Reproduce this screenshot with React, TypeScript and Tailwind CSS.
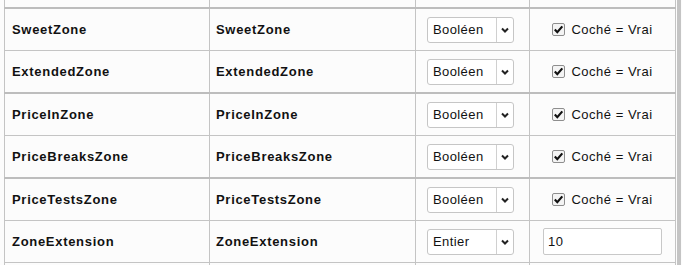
import React from "react";

type Row = { name: string; type: string; value?: string };

const groups: Row[][] = [
  [
    { name: "SweetZone", type: "Booléen" },
    { name: "ExtendedZone", type: "Booléen" },
  ],
  [
    { name: "PriceInZone", type: "Booléen" },
    { name: "PriceBreaksZone", type: "Booléen" },
  ],
  [
    { name: "PriceTestsZone", type: "Booléen" },
    { name: "ZoneExtension", type: "Entier", value: "10" },
  ],
];

const cols = "grid grid-cols-[205px_206px_114px_147px]";

function Chevron() {
  return (
    <svg width="8" height="6" viewBox="0 0 8 6">
      <path d="M1 1.5 L4 4.5 L7 1.5" fill="none" stroke="#222" strokeWidth="2" />
    </svg>
  );
}

function Select({ label }: { label: string }) {
  return (
    <div className="flex h-[26px] w-[87px] items-stretch rounded-[3px] border border-[#c6c6c6] bg-white">
      <div className="flex flex-1 items-center pl-[5px] text-[13px] tracking-[0.4px] text-[#111]">{label}</div>
      <div className="flex w-[17px] items-center justify-center border-l border-[#d0d0d0]">
        <Chevron />
      </div>
    </div>
  );
}

function Check() {
  return (
    <div className="flex items-center gap-[6px]">
      <div className="flex h-[13px] w-[13px] items-center justify-center rounded-[2px] border border-[#8e8e8e] bg-[#f4f4f4]">
        <svg width="11" height="11" viewBox="0 0 11 11">
          <path d="M1.8 5.6 L4.3 8.2 L9.3 2.4" fill="none" stroke="#111" strokeWidth="2.2" />
        </svg>
      </div>
      <span className="text-[13px] tracking-[0.5px] text-[#111]">Coché = Vrai</span>
    </div>
  );
}

function DataRow({ row, first }: { row: Row; first: boolean }) {
  return (
    <div className={`${cols} h-[41px] shrink-0 box-content ${first ? "" : "border-t border-[#c4c4c4]"}`}>
      <div className="flex items-center border-l border-[#c4c4c4] pl-[7px] text-[13px] font-bold tracking-[0.7px] text-[#111]">
        {row.name}
      </div>
      <div className="flex items-center border-l border-[#c4c4c4] pl-[6px] text-[13px] font-bold tracking-[0.7px] text-[#111]">
        {row.name}
      </div>
      <div className="flex items-center border-l border-[#c4c4c4] pl-[11px]">
        <Select label={row.type} />
      </div>
      <div className="flex items-center justify-center border-x border-[#c4c4c4]">
        {row.value !== undefined ? (
          <div className="flex h-[27px] w-[119px] items-center rounded-[2px] border border-[#c8c8c8] bg-white pl-[4px] text-[13px] tracking-[0.4px] text-[#111]">
            {row.value}
          </div>
        ) : (
          <Check />
        )}
      </div>
    </div>
  );
}

export default function App() {
  return (
    <div
      className="flex h-[265px] w-[682px] overflow-hidden bg-[#fcfcfc]"
      style={{ fontFamily: '"Liberation Sans", Arial, sans-serif' }}
    >
      <div className="ml-[4px] flex flex-col">
        <div className={`${cols} h-[7px] shrink-0`}>
          <div className="border-l border-[#c4c4c4]" />
          <div className="border-l border-[#c4c4c4]" />
          <div className="border-l border-[#c4c4c4]" />
          <div className="border-x border-[#c4c4c4]" />
        </div>
        {groups.map((g, gi) => (
          <div key={gi} className="flex shrink-0 flex-col border-t-2 border-[#bdbdbd]">
            {g.map((r, ri) => (
              <DataRow key={r.name} row={r} first={ri === 0} />
            ))}
          </div>
        ))}
        <div className={`${cols} h-[10px] shrink-0 border-t border-[#c4c4c4]`}>
          <div className="border-l border-[#c4c4c4]" />
          <div className="border-l border-[#c4c4c4]" />
          <div className="border-l border-[#c4c4c4]" />
          <div className="border-x border-[#c4c4c4]" />
        </div>
      </div>
      <div className="ml-[1px] h-full w-[4px] bg-[#c4c4c4]" />
    </div>
  );
}
